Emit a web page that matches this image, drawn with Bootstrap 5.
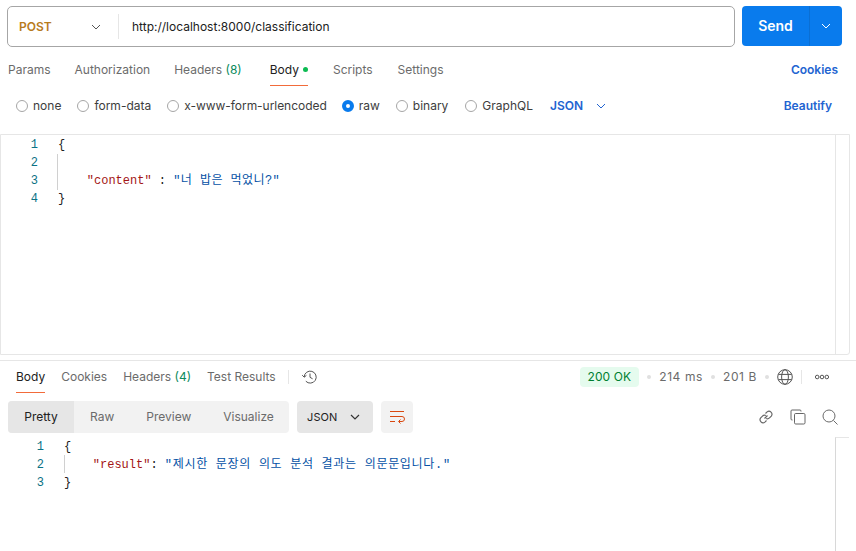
<!DOCTYPE html>
<html lang="ko">
<head>
<meta charset="utf-8">
<link href="https://cdn.jsdelivr.net/npm/bootstrap@5.3.0/dist/css/bootstrap.min.css" rel="stylesheet">
<style>
html,body{margin:0;height:551px;overflow:hidden;background:#fff}
body{font-family:Inter,"Liberation Sans","Noto Sans CJK KR",sans-serif;font-size:12px;color:#6b6b6b;line-height:16px}
.pm-top{height:134px;padding:6px 14px 0 7px}
.pm-urlrow{height:41px;gap:7px}
.pm-url{width:728px;height:41px;border:1px solid #a6a6a6;border-radius:5px;padding-left:11px}
.pm-method{width:99px;font-weight:600;color:#b87b1d;font-size:12px}
.pm-method svg{margin-left:auto;margin-right:17px}
.pm-sep{width:1px;height:25px;background:#e6e6e6;margin-right:13px}
.pm-urltext{color:#212121;font-size:12px}
.pm-send{width:100px;height:40px;background:#097bed;border-radius:4px;color:#fff;font-size:14px;font-weight:600}
.pm-sendl{width:68px;justify-content:center;border-right:1px solid #0a6fd4}
.pm-sendr{width:32px;justify-content:center}
.pm-tabs{height:46px;padding:0 4px 0 1px}
.pm-tab{display:block;height:46px;line-height:46px;color:#6b6b6b;margin-right:24px;position:relative;white-space:nowrap}
.pm-tab.on{color:#212121;margin-right:25px}
.pm-tab.pm-hdr{margin-right:28px}
.pm-tab.pm-scr{margin-right:25px}
.pm-tab.on:after{content:"";position:absolute;left:0;right:0;bottom:7px;height:1px;background:#f26b3a}
.pm-green{color:#0a8a5c}
.pm-dot{display:inline-block;width:5px;height:5px;background:#0cbb52;border-radius:50%;margin-left:4px;vertical-align:2px}
.pm-link{color:#2264d1;font-weight:600}
.pm-cookies{line-height:46px}
.pm-radios{height:21px;padding:0 10px 0 9px;color:#3d3d3d;margin-top:2px}
.pm-radio{display:inline-block;width:12px;height:12px;border:1px solid #a6a6a6;border-radius:50%;margin-right:5px;flex:none}
.pm-radio.on{border:4px solid #097bed}
.pm-ritem{margin-right:16px;white-space:nowrap}
.pm-wide{margin-right:17px}
.pm-tight{letter-spacing:-.04px;margin-right:15px}
.pm-jsonc{margin-left:13px}
.pm-beaut{letter-spacing:-.02px}
.pm-editor{height:221px;width:850px;border:1px solid #e6e6e6;border-radius:0 0 3px 0;position:relative}
.pm-code{font-family:"Liberation Mono","Noto Sans CJK KR",monospace;font-size:12px;line-height:18px;color:#212121;white-space:pre}
.pm-editor .pm-code{padding-top:1px}
.pm-gut{width:37px;text-align:right;color:#0b7285;flex:none}
.pm-key{color:#a31515}
.pm-str{color:#0451a5;letter-spacing:.43px}
.pm-str.pm-long{letter-spacing:.69px}
.pm-lines{margin-left:20px;position:relative}
.pm-guide{position:absolute;width:1px;background:#d0d0d0;left:-1px;top:18px;height:36px}
.pm-guide.pm-short{left:0;top:17px;height:18px}
.pm-scroll{position:absolute;top:0;bottom:0;right:0;width:14px;border-left:1px solid #e6e6e6}
.pm-scroll.pm-rs{top:-1px;right:7px;width:14px;border-top:1px solid #e6e6e6;border-left-color:#d8d8d8}
.pm-resp{border-top:1px solid #e6e6e6;margin-top:5px}
.pm-rtabs{height:40px;padding:0 27px 0 16px}
.pm-rtab{display:block;height:32px;line-height:32px;margin-right:16px;position:relative;white-space:nowrap;color:#6b6b6b}
.pm-rtab.on{color:#212121}
.pm-rtab.pm-last{margin-right:12px}
.pm-rtab.on:after{content:"";position:absolute;left:0;right:0;top:31px;height:1px;background:#f26b3a}
.pm-vsep{width:1px;height:14px;background:#e6e6e6}
.pm-vtop{margin-top:9px}
.pm-vmid{margin:0 13px 0 8px}
.pm-hist{margin:7px 0 0 12px}
.pm-status{height:20px;padding:0 8px;background:#e5fbee;color:#007f31;border-radius:4px;font-size:12px;line-height:20px;letter-spacing:.1px}
.pm-meta{color:#6b6b6b;letter-spacing:.6px}
.pm-sdot{width:4px;height:4px;background:#e0e0e0;border-radius:50%;margin:0 8px}
.pm-stat{height:32px}
.pm-rtool{height:32px;padding:0 18px 0 8px}
.pm-seg{width:281px;height:32px;background:#f2f2f2;border-radius:4px;overflow:hidden}
.pm-segi{height:32px;line-height:32px;white-space:nowrap}
.pm-segi.on{background:#e6e6e6;color:#212121;width:66px;text-align:center}
.pm-gap16{margin-left:16px}
.pm-gap32{margin-left:32px}
.pm-jsonb{width:76px;height:32px;background:#e6e6e6;border-radius:4px;margin-left:8px;color:#212121;padding-left:10px;line-height:32px;font-size:11px;letter-spacing:.1px}
.pm-jchev{margin-left:13px}
.pm-wrap{width:32px;height:32px;background:#f2f2f2;border-radius:4px;margin-left:8px;justify-content:center}
.pm-out{position:relative;margin-top:5px;height:113px}
.pm-out .pm-gut{width:44px}
.pm-icons{gap:16px;margin-left:auto}
</style>
</head>
<body>
<div class="pm-top">
  <div class="pm-urlrow d-flex">
    <div class="pm-url d-flex align-items-center">
      <div class="pm-method d-flex align-items-center">POST<svg width="10" height="6" viewBox="0 0 10 6"><path d="M1 1l4 4 4-4" fill="none" stroke="#555" stroke-width="1"/></svg></div>
      <div class="pm-sep"></div>
      <div class="pm-urltext">http://localhost:8000/classification</div>
    </div>
    <div class="pm-send d-flex">
      <div class="pm-sendl d-flex align-items-center">Send</div>
      <div class="pm-sendr d-flex align-items-center"><svg width="10" height="6" viewBox="0 0 10 6"><path d="M1 1l4 4 4-4" fill="none" stroke="#fff" stroke-width="1"/></svg></div>
    </div>
  </div>
  <div class="pm-tabs d-flex">
    <span class="pm-tab">Params</span>
    <span class="pm-tab">Authorization</span>
    <span class="pm-tab pm-hdr">Headers <span class="pm-green">(8)</span></span>
    <span class="pm-tab on">Body<span class="pm-dot"></span></span>
    <span class="pm-tab pm-scr">Scripts</span>
    <span class="pm-tab">Settings</span>
    <span class="pm-link pm-cookies ms-auto">Cookies</span>
  </div>
  <div class="pm-radios d-flex align-items-center">
    <span class="pm-ritem d-flex align-items-center"><i class="pm-radio"></i>none</span>
    <span class="pm-ritem d-flex align-items-center"><i class="pm-radio"></i>form-data</span>
    <span class="pm-ritem pm-tight d-flex align-items-center"><i class="pm-radio"></i>x-www-form-urlencoded</span>
    <span class="pm-ritem d-flex align-items-center"><i class="pm-radio on"></i>raw</span>
    <span class="pm-ritem pm-wide d-flex align-items-center"><i class="pm-radio"></i>binary</span>
    <span class="pm-ritem pm-wide d-flex align-items-center"><i class="pm-radio"></i>GraphQL</span>
    <span class="pm-link d-flex align-items-center">JSON<svg class="pm-jsonc" width="10" height="6" viewBox="0 0 10 6"><path d="M1 1l4 4 4-4" fill="none" stroke="#2264d1" stroke-width="1"/></svg></span>
    <span class="pm-link pm-beaut ms-auto">Beautify</span>
  </div>
</div>
<div class="pm-editor">
  <div class="pm-code d-flex">
    <div class="pm-gut">1
2
3
4</div>
    <div class="pm-lines">{
<span class="pm-guide"></span>
    <span class="pm-key">"content"</span> : <span class="pm-str">"너 밥은 먹었니?"</span>
}</div>
  </div>
  <div class="pm-scroll"></div>
</div>
<div class="pm-resp">
  <div class="pm-rtabs d-flex align-items-start">
    <span class="pm-rtab on">Body</span>
    <span class="pm-rtab">Cookies</span>
    <span class="pm-rtab">Headers <span class="pm-green">(4)</span></span>
    <span class="pm-rtab pm-last">Test Results</span>
    <span class="pm-vsep pm-vtop"></span>
    <svg class="pm-hist" width="18" height="18" viewBox="0 0 18 18" fill="none" stroke="#555" stroke-width="1"><path d="M3.2 9a6 6 0 1 1 1.6 4.2"/><path d="M1.2 7.2L3.2 9.2 5.4 7.4"/><path d="M9 5.5V9.3l2.6 1.5"/></svg>
    <div class="pm-stat d-flex align-items-center ms-auto">
      <span class="pm-status">200 OK</span>
      <span class="pm-sdot"></span><span class="pm-meta">214 ms</span>
      <span class="pm-sdot"></span><span class="pm-meta">201 B</span>
      <span class="pm-sdot"></span>
      <svg width="16" height="16" viewBox="0 0 16 16" fill="none" stroke="#555" stroke-width="1"><circle cx="8" cy="8" r="7.3"/><ellipse cx="8" cy="8" rx="3.4" ry="7.3"/><path d="M1.4 5.4h13.2M1.4 10.6h13.2"/></svg>
      <span class="pm-vsep pm-vmid"></span>
      <svg width="14" height="6" viewBox="0 0 14 6" fill="none" stroke="#555" stroke-width="1"><circle cx="2.2" cy="3" r="1.8"/><circle cx="7" cy="3" r="1.8"/><circle cx="11.8" cy="3" r="1.8"/></svg>
    </div>
  </div>
  <div class="pm-rtool d-flex align-items-center">
    <div class="pm-seg d-flex">
      <span class="pm-segi on">Pretty</span>
      <span class="pm-segi pm-gap16">Raw</span>
      <span class="pm-segi pm-gap32">Preview</span>
      <span class="pm-segi pm-gap32">Visualize</span>
    </div>
    <div class="pm-jsonb d-flex align-items-center">JSON<svg class="pm-jchev" width="10" height="6" viewBox="0 0 10 6"><path d="M1 1l4 4 4-4" fill="none" stroke="#333" stroke-width="1.2"/></svg></div>
    <div class="pm-wrap d-flex align-items-center"><svg width="16" height="14" viewBox="0 0 16 14" fill="none" stroke="#d9480f" stroke-width="1"><path d="M1 1.5h14M1 6.5h12a2.5 2.5 0 0 1 0 5H10M11.5 9.5l-2 2 2 2M1 11.5h5"/></svg></div>
    <div class="pm-icons d-flex align-items-center">
      <svg width="16" height="16" viewBox="0 0 16 16" fill="none" stroke="#666" stroke-width="1.15"><path d="M6.5 9.5l3-3M7.5 4.5l1.6-1.6a3 3 0 0 1 4.2 4.2l-1.8 1.8a3 3 0 0 1-3.4.6M8.5 11.5l-1.6 1.6a3 3 0 0 1-4.2-4.2l1.8-1.8a3 3 0 0 1 3.4-.6"/></svg>
      <svg width="16" height="16" viewBox="0 0 16 16" fill="none" stroke="#666" stroke-width="1"><rect x="4.5" y="4.5" width="10.5" height="10.5" rx="1.2"/><path d="M11 2.5V2a1 1 0 0 0-1-1H2a1 1 0 0 0-1 1v8a1 1 0 0 0 1 1h.5"/></svg>
      <svg width="16" height="16" viewBox="0 0 16 16" fill="none" stroke="#6b6b6b" stroke-width="1"><circle cx="7" cy="7" r="6"/><path d="M11.5 11.5L15.5 15.5"/></svg>
    </div>
  </div>
  <div class="pm-out pm-code d-flex">
    <div class="pm-gut">1
2
3</div>
    <div class="pm-lines">{
<span class="pm-guide pm-short"></span>    <span class="pm-key">"result"</span>: <span class="pm-str pm-long">"제시한 문장의 의도 분석 결과는 의문문입니다."</span>
}</div>
    <div class="pm-scroll pm-rs"></div>
  </div>
</div>
<script src="https://cdn.jsdelivr.net/npm/bootstrap@5.3.0/dist/js/bootstrap.bundle.min.js"></script>
</body>
</html>
